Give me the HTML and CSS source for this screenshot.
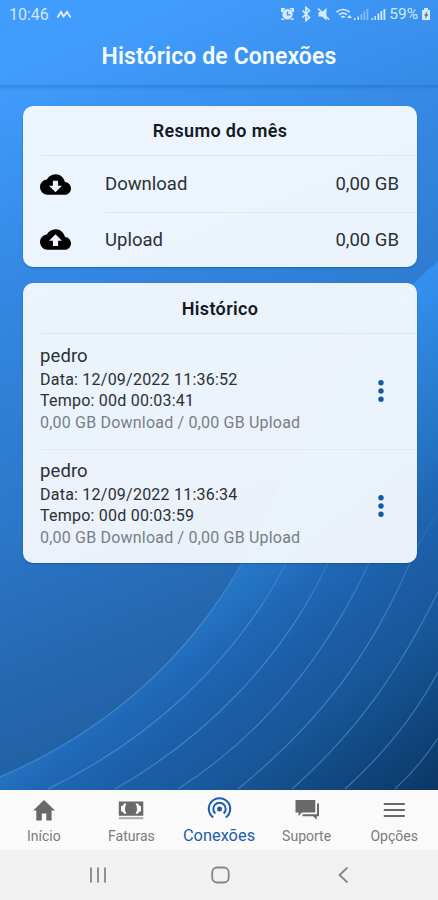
FILE: index.html
```html
<!DOCTYPE html>
<html lang="pt-BR">
<head>
<meta charset="utf-8">
<title>Histórico de Conexões</title>
<link rel="stylesheet" href="styles.css">
</head>
<body>
<div class="phone">
  <svg class="wallpaper" viewBox="0 0 438 790" preserveAspectRatio="none" aria-hidden="true">
    <defs>
      <linearGradient id="sky" gradientUnits="userSpaceOnUse" x1="20" y1="60" x2="290" y2="720">
        <stop offset="0" stop-color="#419dfd"/>
        <stop offset=".3" stop-color="#3487e2"/>
        <stop offset=".6" stop-color="#2b77c9"/>
        <stop offset=".8" stop-color="#2568b0"/>
        <stop offset="1" stop-color="#1f5d9f"/>
      </linearGradient>
      <linearGradient id="wave" gradientUnits="userSpaceOnUse" x1="288" y1="384" x2="534" y2="712">
        <stop offset="0" stop-color="#348fee"/>
        <stop offset=".34" stop-color="#2473c2"/>
        <stop offset=".42" stop-color="#1f67b5"/>
        <stop offset=".56" stop-color="#1b5da5"/>
        <stop offset=".68" stop-color="#18579a"/>
        <stop offset="1" stop-color="#0b3866"/>
      </linearGradient>
      <linearGradient id="ripple" gradientUnits="userSpaceOnUse" x1="0" y1="480" x2="0" y2="620">
        <stop offset="0" stop-color="#6aaeec" stop-opacity="0"/>
        <stop offset="1" stop-color="#6aaeec" stop-opacity=".45"/>
      </linearGradient>
    </defs>
    <path fill="url(#sky)" d="M0 0H438V790H0Z"/>
    <path fill="url(#wave)" d="M0 777C110 730 190 655 242 563C300 455 330 355 438 261V790H0Z"/>
    <g class="ripples" stroke="url(#ripple)">
      <path d="M0 777C110 730 190 655 242 563"/>
      <path d="M48 789C150 740 236 660 285 565C325 485 350 415 438 335"/>
      <path d="M115 789C205 738 282 660 327 565C360 490 385 440 438 390"/>
      <path d="M178 789C265 733 325 657 368 565C390 515 410 485 438 450"/>
      <path d="M238 789C320 722 370 655 409 565Q422 535 438 513"/>
      <path d="M292 789C355 733 397 675 438 592"/>
      <path d="M345 789C385 753 415 715 438 672"/>
      <path d="M395 789Q420 766 438 738"/>
    </g>
  </svg>

  <div class="screen">
    <header class="topbar">
      <div class="status">
        <span class="clock">10:46</span>
        <svg class="peaks" viewBox="0 0 16 10"><path d="M1.500 8.500L5 3L7.500 7.500L11 3L14.500 8.500"/></svg>
        <svg class="tray" viewBox="0 0 106 16">
          <g class="solid">
            <circle cx="7.500" cy="8.200" r="5.200"/>
            <path d="M1 2h4.500L2.500 6H1zM9.500 2H14v4h-1.500zM1.500 11.500l3.500 2.500H1.500zM10 14l3.500-2.500V14z"/>
            <path d="M38.500 6h3.500l4.500-4v12.500L42 10.500h-3.500z"/>
            <path d="M74 12h1.500v2H74zM77.500 10.500H79V14h-1.500zM91.500 12H93v2h-1.500zM94.500 10h1.500v4h-1.500zM97.500 7.500h1.800V14h-1.800zM100.500 5h1.800v9h-1.800zM103.500 3h1.800v11h-1.800z"/>
            <path d="M67 12l2.500-3 2.500 3z"/>
          </g>
          <path class="faint" d="M80.500 8h1.800v6h-1.800zM83.500 5.500h1.800V14h-1.800zM86.500 3h1.800v11h-1.800z"/>
          <path class="cut" d="M7.500 5.500v3.300h3"/>
          <path class="line" d="M22.500 4.500l7 7L26 14.500V1.500l3.500 3-7 7M38 2.500l11 11M56.500 6q6.500-5 13 0M59 8.700q4-3.200 8 0M61.300 11.300q1.800-1.400 3.500 0"/>
        </svg>
        <span class="charge">59%</span>
        <svg class="battery" viewBox="0 0 10 14"><path class="solid" d="M3 1h4v2h2v10H1V3h2z"/><path class="bolt" d="M6.500 4L3 8.500h1.800L4 12l3.500-4.500H5.500z"/></svg>
      </div>
      <h1 class="title">Histórico de Conexões</h1>
    </header>

    <main class="content">
      <section class="card">
        <h2 class="card-title">Resumo do mês</h2>
        <div class="usage">
          <svg class="cloud" viewBox="0 0 24 24"><path d="M19.350 10.040C18.670 6.590 15.640 4 12 4 9.110 4 6.600 5.640 5.350 8.040 2.340 8.360 0 10.910 0 14c0 3.310 2.690 6 6 6h13c2.760 0 5-2.240 5-5 0-2.640-2.050-4.780-4.650-4.960zM17 13l-5 5-5-5h3V9h4v4h3z"/></svg>
          <div class="usage-row"><span>Download</span><span>0,00 GB</span></div>
        </div>
        <div class="usage">
          <svg class="cloud" viewBox="0 0 24 24"><path d="M19.350 10.040C18.670 6.590 15.640 4 12 4 9.110 4 6.600 5.640 5.350 8.040 2.340 8.360 0 10.910 0 14c0 3.310 2.690 6 6 6h13c2.760 0 5-2.240 5-5 0-2.640-2.050-4.780-4.650-4.960zM14 13v4h-4v-4H7l5-5 5 5h-3z"/></svg>
          <div class="usage-row"><span>Upload</span><span>0,00 GB</span></div>
        </div>
      </section>

      <section class="card history">
        <h2 class="card-title">Histórico</h2>
        <article class="session">
          <div class="session-text">
            <h3 class="user">pedro</h3>
            <p class="detail">Data: 12/09/2022 11:36:52</p>
            <p class="detail">Tempo: 00d 00:03:41</p>
            <p class="detail muted">0,00 GB Download / 0,00 GB Upload</p>
          </div>
          <svg class="more" viewBox="0 0 6 24"><circle cx="3" cy="3.800" r="2.700"/><circle cx="3" cy="12" r="2.700"/><circle cx="3" cy="20.200" r="2.700"/></svg>
        </article>
        <article class="session">
          <div class="session-text">
            <h3 class="user">pedro</h3>
            <p class="detail">Data: 12/09/2022 11:36:34</p>
            <p class="detail">Tempo: 00d 00:03:59</p>
            <p class="detail muted">0,00 GB Download / 0,00 GB Upload</p>
          </div>
          <svg class="more" viewBox="0 0 6 24"><circle cx="3" cy="3.800" r="2.700"/><circle cx="3" cy="12" r="2.700"/><circle cx="3" cy="20.200" r="2.700"/></svg>
        </article>
      </section>
    </main>

    <nav class="tabs">
      <a class="tab"><svg viewBox="0 0 26 26"><path d="M10.800 23.500v-7h4.500v7h5.300v-10H24L13 3 2.200 13.500H5.300v10z"/></svg><span>Início</span></a>
      <a class="tab"><svg viewBox="0 0 26 26"><path fill-rule="evenodd" d="M.8 4.500h24.500v14.300H.8zM3 9.200v5q2.200.2 3 2.500h2.500Q5.500 11.600 8.500 6.500H6Q5.200 9 3 9.200zM23 9.200v5q-2.200.2-3 2.500h-2.500q3-5.100 0-10.200H20q.8 2.500 3 2.700z"/><path class="pale" d="M.8 20.200h24.500v2H.8z"/></svg><span>Faturas</span></a>
      <a class="tab active"><svg viewBox="0 0 26 26"><g class="waves"><path d="M7.200 21.500A10.700 10.700 0 1 1 19.800 21.500"/><path d="M9.300 17.500A6.200 6.200 0 1 1 17.700 17.500"/></g><circle cx="13.500" cy="13" r="2.500"/></svg><span>Conexões</span></a>
      <a class="tab"><svg viewBox="0 0 26 26"><path d="M1.500 3h19.800v12.500H8L4.500 19v-3.500h-3zM23 6.500h2v12.800h-2.300v3.500l-3.500-3.500H8.500v-2H23z"/></svg><span>Suporte</span></a>
      <a class="tab"><svg viewBox="0 0 26 26"><path d="M2.800 6h21v2h-21zM2.800 12h21v2h-21zM2.800 18h21v2h-21z"/></svg><span>Opções</span></a>
    </nav>

    <footer class="system">
      <svg viewBox="0 0 20 20"><path d="M3 2.500v15M10 2.500v15M17 2.500v15"/></svg>
      <svg viewBox="0 0 20 20"><rect x="1.200" y="2.500" width="16.500" height="15" rx="5"/></svg>
      <svg viewBox="0 0 20 20"><path d="M14.500 2.500L6.500 10L14.500 17.500"/></svg>
    </footer>
  </div>
</div>
</body>
</html>
```
FILE: styles.css
```css
* { box-sizing: border-box; margin: 0; padding: 0; }

body {
  font-family: Roboto, "Liberation Sans", sans-serif;
  color: #2b3036;
}

svg { display: block; }

.phone {
  display: grid;
  width: 438px;
  height: 900px;
  overflow: hidden;
}

.wallpaper, .screen { grid-area: 1 / 1; }
.wallpaper { width: 438px; height: 790px; }

.ripples {
  fill: none;
  stroke-width: 1.200;
}

.screen {
  display: flex;
  flex-direction: column;
  z-index: 1;
  height: 900px;
}

.topbar {
  height: 86px;
  border-bottom: 1px solid rgba(30, 95, 165, .3);
  box-shadow: 0 1px 3px rgba(20, 80, 150, .35);
}

.status {
  display: flex;
  align-items: center;
  height: 28px;
  padding: 0 7px 0 9px;
  color: #cfe7ff;
  font-size: 16px;
}

.clock { width: 40px; }
.peaks { width: 16px; height: 10px; margin-left: 7px; fill: none; stroke: #d8ecff; stroke-width: 2; }
.tray { width: 106px; height: 16px; margin-left: auto; }
.solid { fill: #d5eaff; }
.faint { fill: #7ebcfb; }
.cut { fill: none; stroke: #3c94f3; stroke-width: 1.300; }
.line { fill: none; stroke: #d5eaff; stroke-width: 1.700; }
.charge { margin-left: 3px; font-size: 15.500px; }
.battery { width: 10px; height: 14px; margin-left: 3px; }
.bolt { fill: #477399; }

.title {
  color: #f5fbff;
  font-size: 23px;
  font-weight: 600;
  letter-spacing: .12px;
  line-height: 57px;
  text-align: center;
}

.content {
  display: flex;
  flex: 1;
  flex-direction: column;
  gap: 16px;
  padding: 20px 21px 0 23px;
}

.card {
  border-radius: 10px;
  background: rgba(255, 255, 255, .905);
  box-shadow: 0 1px 2px rgba(0, 60, 130, .4);
}

.card-title {
  height: 50px;
  margin-left: 18px;
  padding-right: 18px;
  border-bottom: 1px solid #dfe7ee;
  color: #14191e;
  font-size: 18px;
  font-weight: 600;
  letter-spacing: .35px;
  line-height: 50px;
  text-align: center;
}

.usage {
  display: flex;
  align-items: center;
  gap: 34px;
  height: 56px;
  padding-left: 17px;
}

.usage + .usage { height: 55px; }

.cloud { width: 31px; height: 31px; fill: #000; }

.usage-row {
  display: flex;
  flex: 1;
  justify-content: space-between;
  height: 56px;
  padding-right: 18px;
  font-size: 18.500px;
  line-height: 57px;
}

.usage + .usage .usage-row { height: 55px; border-top: 1px solid #dfe7ee; line-height: 55px; }

.history { height: 280px; }
.history .card-title { height: 51px; line-height: 52px; }

.session {
  display: flex;
  align-items: flex-start;
  justify-content: space-between;
  height: 115px;
  margin-left: 17px;
  padding: 10px 33px 0 0;
}

.session + .session { padding-top: 9px; border-top: 1px solid #e2e9f0; }

.user { font-size: 18.500px; font-weight: 400; line-height: 24.600px; letter-spacing: .1px; }
.detail { font-size: 16px; line-height: 21.500px; letter-spacing: .23px; }
.muted { color: #777f88; letter-spacing: .2px; }
.more { width: 6px; height: 24px; margin-top: 34.500px; fill: #1558a5; }

.tabs {
  display: grid;
  grid-template-columns: repeat(5, 1fr);
  height: 60px;
  background: #fafafa;
}

.tab {
  display: flex;
  flex-direction: column;
  align-items: center;
  padding-top: 7px;
  color: #7c7c7c;
  font-size: 14px;
  line-height: 26px;
}

.tab svg { width: 26px; height: 26px; fill: #696969; }
.tab .pale { fill: #aaa; }
.tab.active { padding-top: 6px; color: #1c5dac; font-size: 16.400px; line-height: 28px; }
.tab.active svg { fill: #1c5dac; }
.waves { fill: none; stroke: #1c5dac; stroke-width: 2; }

.system {
  display: flex;
  align-items: center;
  justify-content: space-between;
  height: 50px;
  padding: 0 85px 0 88px;
  background: #f1f1f1;
}

.system svg { width: 20px; height: 20px; fill: none; stroke: #858585; stroke-width: 1.800; }
```
